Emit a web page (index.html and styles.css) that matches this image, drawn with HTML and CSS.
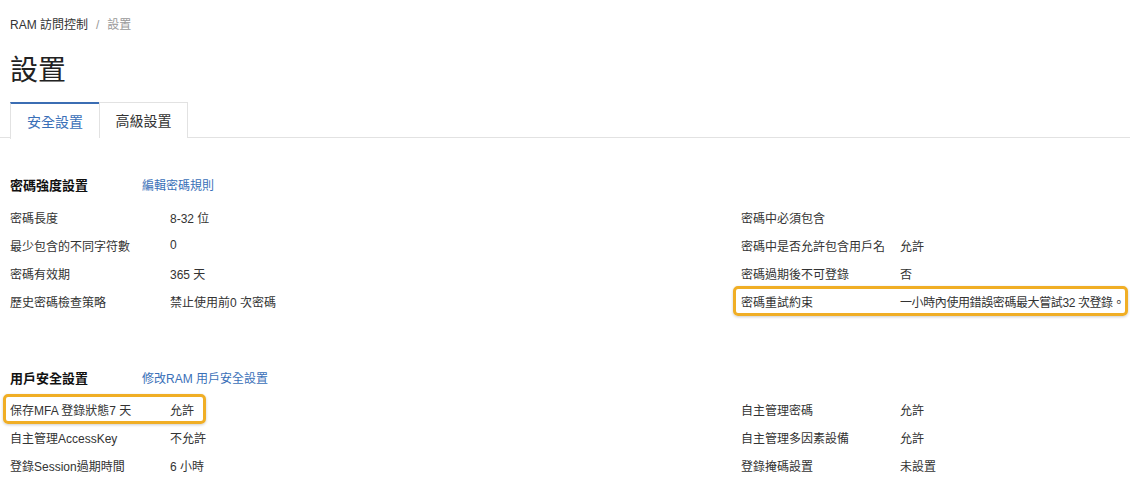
FILE: index.html
```html
<!DOCTYPE html>
<html lang="zh-Hant">
<head>
<meta charset="utf-8">
<title>設置</title>
<link rel="stylesheet" href="styles.css">
</head>
<body>
<div class="page">
  <div class="breadcrumb"><span class="crumb">RAM 訪問控制</span><span class="sep">/</span><span class="crumb current">設置</span></div>
  <h1 class="title">設置</h1>
  <div class="tabs">
    <div class="tab active">安全設置</div>
    <div class="tab">高級設置</div>
    <div class="tab-rest"></div>
  </div>

  <section class="section first">
    <div class="section-head"><h2 class="section-title">密碼強度設置</h2><a class="link">編輯密碼規則</a></div>
    <div class="row">
      <div class="pair left"><span class="label">密碼長度</span><span class="value">8-32 位</span></div>
      <div class="pair right"><span class="label">密碼中必須包含</span><span class="value"></span></div>
    </div>
    <div class="row">
      <div class="pair left"><span class="label">最少包含的不同字符數</span><span class="value">0</span></div>
      <div class="pair right"><span class="label">密碼中是否允許包含用戶名</span><span class="value">允許</span></div>
    </div>
    <div class="row">
      <div class="pair left"><span class="label">密碼有效期</span><span class="value">365 天</span></div>
      <div class="pair right"><span class="label">密碼過期後不可登錄</span><span class="value">否</span></div>
    </div>
    <div class="row">
      <div class="pair left"><span class="label">歷史密碼檢查策略</span><span class="value">禁止使用前0 次密碼</span></div>
      <div class="pair right hl hl-right"><span class="label">密碼重試約束</span><span class="value tight">一小時內使用錯誤密碼最大嘗試32 次登錄。</span></div>
    </div>
  </section>

  <section class="section second">
    <div class="section-head"><h2 class="section-title">用戶安全設置</h2><a class="link">修改RAM 用戶安全設置</a></div>
    <div class="row">
      <div class="pair left hl hl-left"><span class="label">保存MFA 登錄狀態7 天</span><span class="value">允許</span></div>
      <div class="pair right"><span class="label">自主管理密碼</span><span class="value">允許</span></div>
    </div>
    <div class="row">
      <div class="pair left"><span class="label">自主管理AccessKey</span><span class="value">不允許</span></div>
      <div class="pair right"><span class="label">自主管理多因素設備</span><span class="value">允許</span></div>
    </div>
    <div class="row">
      <div class="pair left"><span class="label">登錄Session過期時間</span><span class="value">6 小時</span></div>
      <div class="pair right"><span class="label">登錄掩碼設置</span><span class="value">未設置</span></div>
    </div>
  </section>
</div>
</body>
</html>
```

FILE: styles.css
```css
* { box-sizing: border-box; }
html, body { margin: 0; padding: 0; background: #fff; }
body {
  font-family: "Liberation Sans", "Noto Sans CJK TC", sans-serif;
  font-size: 12px;
  color: #333;
  overflow: hidden;
}
.page { padding: 17px 0 0 10px; }

.breadcrumb { display: flex; align-items: center; line-height: 16px; height: 16px; color: #333; }
.sep { color: #999; margin: 0 8px; }
.current { color: #999; }

.title {
  margin: 19px 0 0 0;
  font-size: 28px;
  font-weight: normal;
  line-height: 38px;
  color: #222;
}

.tabs { display: flex; margin-top: 12px; height: 36px; margin-left: -10px; padding-left: 10px; border-bottom: 1px solid #e2e2e2; }
.tab {
  width: 89px;
  height: 36px;
  display: flex;
  align-items: center;
  justify-content: center;
  padding-bottom: 2px;
  font-size: 14px;
  color: #333;
  border: 1px solid #e2e2e2;
  border-bottom: none;
  background: #fff;
}
.tab.active {
  color: #3a70b8;
  border-top: 2px solid #3b6db3;
  border-right: none;
  height: 37px;
  margin-bottom: -1px;
}
.tab-rest { flex: 1; }

.section.first { margin-top: 36px; }
.section.second { margin-top: 52px; }
.section-head { display: flex; align-items: center; height: 20px; }
.section-title { margin: 0; width: 132px; font-size: 13px; font-weight: bold; color: #111; }
.link { color: #3a70b8; }

.section-head + .row { margin-top: 9px; }
.section.second .section-head + .row { margin-top: 8px; }
.row { display: flex; height: 28px; align-items: center; }
.pair { display: flex; align-items: center; height: 28px; position: relative; }
.pair.left { width: 731px; }
.pair.right { flex: 1; min-width: 0; }
.label { width: 160px; flex: none; white-space: nowrap; }
.pair.right .label { width: 159px; }
.value { white-space: nowrap; }
.value.tight { letter-spacing: -0.4px; }

.hl::after {
  content: "";
  position: absolute;
  top: -1px;
  bottom: -1px;
  border: 3px solid #f0ae25;
  border-radius: 5px;
  box-shadow: 0 1px 3px rgba(0,0,0,0.2);
  pointer-events: none;
}
.hl-right::after { left: -8px; right: 2px; }
.hl-left::after { left: -7px; width: 197px; }
```
